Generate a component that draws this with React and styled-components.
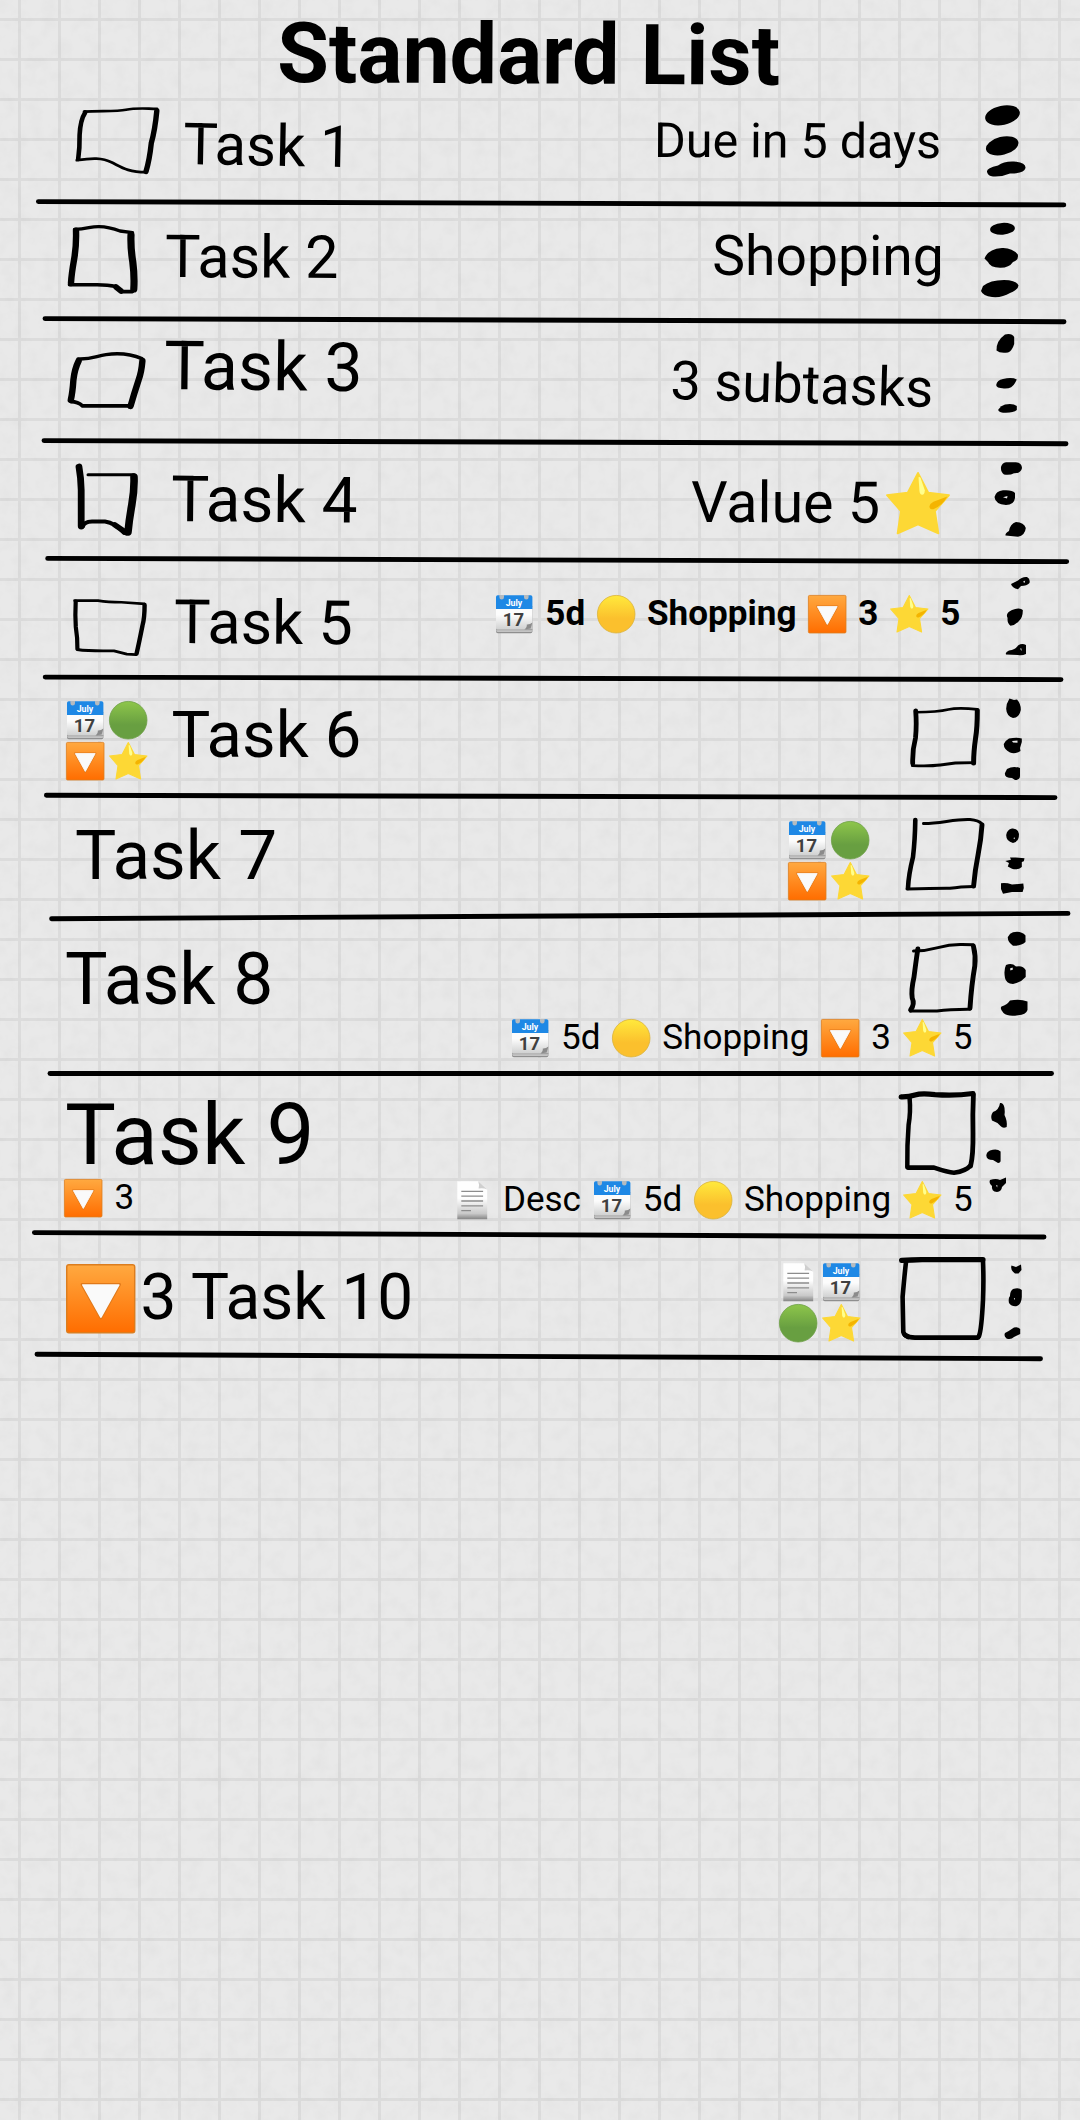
import React, { useId } from "react";
import styled, { createGlobalStyle } from "styled-components";

const GlobalStyle = createGlobalStyle`
  html, body { margin: 0; padding: 0; background: #e9e9e9; }
`;

const Page = styled.main`
  position: relative;
  width: 1080px;
  height: 2120px;
  overflow: hidden;
  color: #000;
  font-family: Roboto, "Liberation Sans", sans-serif;
  background-color: #e9e9e9;
  background-image:
    repeating-linear-gradient(to right, transparent 0 18px, #dcdcdc 18px 21px, transparent 21px 40px),
    repeating-linear-gradient(to bottom, transparent 0 18px, #dcdcdc 18px 21px, transparent 21px 40px);
`;

const Grain = styled.svg`
  position: absolute;
  inset: 0;
  width: 1080px;
  height: 2120px;
  pointer-events: none;
`;

const Sheet = styled.div`
  position: relative;
  display: flex;
  flex-direction: column;
`;

const Header = styled.header`
  box-sizing: border-box;
  height: 95px;
  padding: 12.3px 0 0 276.8px;
`;

const Title = styled.h1`
  margin: 0;
  font-size: 84.2px;
  font-weight: 700;
  line-height: 1;
  white-space: nowrap;
  transform: rotate(0.3deg);
  transform-origin: 0 84%;
`;

const Row = styled.section`
  box-sizing: border-box;
  display: flex;
  flex-direction: column;
  height: ${(p) => p.$height}px;
`;

const Line = styled.div`
  box-sizing: border-box;
  display: grid;
  grid-template-columns: ${(p) => p.$cols.map((c) => `${c}px`).join(" ")};
  align-items: start;
  flex: none;
  height: ${(p) => (p.$height ? `${p.$height}px` : "100%")};
  padding-left: ${(p) => p.$indent}px;
`;

const Text = styled.span`
  display: block;
  margin-top: ${(p) => p.$drop}px;
  font-size: ${(p) => p.$size}px;
  line-height: 1;
  white-space: nowrap;
  transform: rotate(${(p) => p.$tilt || 0}deg);
  transform-origin: 0 84%;
`;

const Strip = styled.div`
  display: flex;
  align-items: flex-start;
  gap: 9.1px;
  margin-top: ${(p) => p.$drop || 0}px;
  font-size: 35.1px;
  font-weight: ${(p) => (p.$bold ? 700 : 400)};
  line-height: 37.8px;
  white-space: nowrap;
`;

const IconGrid = styled.div`
  display: grid;
  grid-template-columns: ${(p) => p.$pitch || 43}px ${(p) => p.$pitch || 43}px;
  grid-auto-rows: 41px;
  margin-top: ${(p) => p.$drop}px;
`;

const IconCell = styled.span`
  display: flex;
  flex: none;
  justify-content: center;
  width: 43.6px;
`;

const IconSvg = styled.svg`
  display: block;
  flex: none;
  width: ${(p) => p.$size}px;
  height: ${(p) => p.$size}px;
  margin-top: ${(p) => p.$drop || 0}px;
  overflow: visible;
`;

const Ink = styled.svg`
  display: block;
  overflow: visible;
  fill: none;
  stroke: #000;
  stroke-linecap: round;
  stroke-linejoin: round;
`;

const Blots = styled(Ink)`
  fill: #000;
  stroke: none;
`;

const RuleSvg = styled(Ink)`
  flex: none;
  stroke-width: 4.9px;
`;

const CalendarText = styled.text`
  font-family: Roboto, "Liberation Sans", sans-serif;
  font-weight: 700;
  text-anchor: middle;
`;

function Calendar() {
  const id = useId();
  return (
    <>
      <defs>
        <linearGradient id={id} x1="0" y1="0" x2="0" y2="1">
          <stop offset="0.35" stopColor="#fcfcfc" />
          <stop offset="1" stopColor="#cfd0d0" />
        </linearGradient>
      </defs>
      <rect x="1" y="10" width="36.4" height="28.3" rx="1.8" fill="#8f8f8f" />
      <rect x="1.2" y="10" width="36" height="26.9" rx="1.5" fill="#c4c4c4" />
      <rect x="1" y="34.2" width="36.4" height="1" fill="#979797" />
      <path d="M1 12H37.4V28L30 34.6H2.6Q1 34.6 1 33Z" fill={`url(#${id})`} />
      <path d="M37.4 27.6Q35 29.8 31.8 29.6Q32.2 32.6 29.3 34.6L35.6 33.4Z" fill="#8b8b8b" />
      <path d="M1 14V2Q1 .3 2.7 .3H35.7Q37.4 .3 37.4 2V14Z" fill="#1e88e5" />
      <path d="M4.4 0H9V2.2A2.3 2.4 0 0 1 4.4 2.2ZM29 0H33.6V2.2A2.3 2.4 0 0 1 29 2.2Z" fill="#b5bbc0" />
      <CalendarText x="19" y="10.6" fontSize="8.8" fill="#fff">July</CalendarText>
      <CalendarText x="18.4" y="31" fontSize="18.5" fill="#404040">17</CalendarText>
    </>
  );
}

function Circle({ from, to, edge }) {
  const id = useId();
  return (
    <>
      <defs>
        <linearGradient id={id} x1="0" y1="0" x2="0" y2="1">
          <stop offset="0.05" stopColor={from} />
          <stop offset="0.62" stopColor={to} />
        </linearGradient>
      </defs>
      <circle cx="19.2" cy="19.2" r="18.8" fill={`url(#${id})`} stroke={edge} strokeWidth="0.8" />
    </>
  );
}

function Down() {
  const id = useId();
  return (
    <>
      <defs>
        <linearGradient id={id} x1="0" y1="0" x2="0" y2="1">
          <stop offset="0" stopColor="#ffa940" />
          <stop offset="1" stopColor="#ff6d00" />
        </linearGradient>
      </defs>
      <rect x="0.4" y="0.4" width="37.6" height="37.6" rx="1.2" fill={`url(#${id})`} stroke="#dc7d1e" strokeWidth="0.8" />
      <path d="M8.9 11.3H29.6L19.3 29.8Z" fill="#fafafa" stroke="#e0791a" strokeWidth="1.6" strokeLinejoin="round" />
      <path d="M9.3 11.6H29.2L19.3 29.4Z" fill="#fafafa" stroke="#fafafa" strokeWidth="0.9" strokeLinejoin="round" />
    </>
  );
}

function Star() {
  return (
    <>
      <path
        d="M19.3 .5L25.5 12.5L38 14L29.5 23.6L31.6 37L19.3 31.6L7 37L9 23.6L.6 14L13.1 12.5Z"
        fill="#fdd835" stroke="#fdd835" strokeWidth="1.1" strokeLinejoin="round"
      />
      <path d="M19.6 3.2Q20.4 2.6 20.9 3.8L23.4 11Q23.4 13.6 21.8 13.7Q20.4 13.6 20.2 11.6Z" fill="#ffff8d" />
      <path d="M37 14.8Q34 20.4 28.6 22.4Q26.2 23 26.2 20.7Q26.4 19.2 28.6 18Z" fill="#f4b400" />
    </>
  );
}

function Doc() {
  const id = useId();
  return (
    <>
      <defs>
        <linearGradient id={id} x1="0" y1="0" x2="0" y2="1">
          <stop offset="0.45" stopColor="#fefefe" />
          <stop offset="0.85" stopColor="#c9c9c9" />
          <stop offset="1" stopColor="#858585" />
        </linearGradient>
      </defs>
      <path d="M4.3 .2H25.2L34.2 8.4V38.2H4.3Z" fill={`url(#${id})`} />
      <path d="M25.2 .2Q26.8 4 25.6 7.6Q30 6.6 34.2 8.4Z" fill="#cfcfcf" />
      <path d="M8.3 10.3H30.1M8.3 15.2H30.1M8.3 20H30.1M8.3 24.8H30.1M8.3 29.7H18" stroke="#8c8c8c" strokeWidth="1.3" />
    </>
  );
}

const glyphs = {
  calendar: <Calendar />,
  yellow: <Circle from="#ffe63b" to="#fbc02d" edge="#dbb33a" />,
  green: <Circle from="#8bc34a" to="#689f41" edge="#6f9f48" />,
  down: <Down />,
  star: <Star />,
  doc: <Doc />,
};

function Icon({ name, size = 38.6, drop }) {
  return (
    <IconSvg viewBox="0 0 38.6 38.6" $size={size} $drop={drop} aria-hidden="true">
      {glyphs[name]}
    </IconSvg>
  );
}

function Tag({ icon }) {
  return <IconCell><Icon name={icon} /></IconCell>;
}

function Tags({ icons, drop, pitch }) {
  return (
    <IconGrid $drop={drop} $pitch={pitch}>
      {icons.map((name) => <Tag key={name} icon={name} />)}
    </IconGrid>
  );
}

// Each stroke is [path, pen width]; the view box starts at the row's top edge.
function Box({ x, y, strokes }) {
  return (
    <Ink width="90" height="100" viewBox={`${x} ${y} 90 100`} role="img" aria-label="Checkbox">
      {strokes.map(([d, w], i) => <path key={i} d={d} strokeWidth={w} />)}
    </Ink>
  );
}

function Dots({ y, children }) {
  return (
    <Blots width="60" height="100" viewBox={`980 ${y} 60 100`} role="img" aria-label="More">
      {children}
    </Blots>
  );
}

function Blob({ x, y, rx, ry, turn = 0 }) {
  return <ellipse cx={x} cy={y} rx={rx} ry={ry} transform={`rotate(${turn} ${x} ${y})`} />;
}

function Rule({ y, from, to }) {
  return (
    <RuleSvg width="1080" height="16" viewBox={`0 ${y} 1080 16`} aria-hidden="true">
      <path d={`M${from[0] + 2} ${from[1]}L${to[0] - 2} ${to[1]}`} />
    </RuleSvg>
  );
}

export default function App() {
  return (
    <Page>
      <GlobalStyle />
      <Grain aria-hidden="true">
        <filter id="paper" x="0" y="0" width="100%" height="100%">
          <feTurbulence type="fractalNoise" baseFrequency="0.07 0.07" numOctaves="3" seed="4" />
          <feColorMatrix values="0 0 0 0 0  0 0 0 0 0  0 0 0 0 0  0.04 0 0 0 -0.016" />
        </filter>
        <rect width="1080" height="2120" filter="url(#paper)" />
      </Grain>
      <Sheet>
        <Header><Title>Standard List</Title></Header>

        <Row $height={100}>
          <Line $indent={70} $cols={[113, 471.2, 325.8, 60]}>
            <Box x={70} y={95} strokes={[
              ["M85.2 112.5Q80.3 120 79.6 135Q79.8 148 78.2 159", 4.6],
              ["M84 111.7C100 110.6 116 112 126 109.8S144 108.6 157 108.8", 2.7],
              ["M156.8 111Q155 130 151.3 143Q149.5 160 146 171.5", 5.4],
              ["M76.8 160.2C92 158 102 157.5 112 162.5S128 172 146 172.2", 2.8],
            ]} />
            <Text $size={57.9} $drop={21.1} $tilt={1.1}>Task 1</Text>
            <Text $size={48.4} $drop={22} $tilt={0.2}>Due in 5 days</Text>
            <Dots y={95}>
              <Blob x={1002.5} y={115.3} rx={17.6} ry={9.6} turn={-12} />
              <Blob x={1002.2} y={145.8} rx={16.6} ry={9} turn={-14} />
              <path d="M987 172Q986 168 998 165.5Q1004 161 1014 161.5Q1026 162 1025.5 168Q1024 173.5 1010 173.5Q1002 177 993 176.5Q988 176 987 172Z" />
            </Dots>
          </Line>
        </Row>
        <Rule y={195} from={[36.4, 201.6]} to={[1065.8, 204.9]} />

        <Row $height={101}>
          <Line $indent={66} $cols={[98.5, 547.8, 267.7, 60]}>
            <Box x={66} y={211} strokes={[
              ["M76 230.6Q76.5 246 74 260T71 283", 6.4],
              ["M74.5 229.4C88 229 90 226.4 99 226.6S112 228 120 231T132.5 232.6", 3.4],
              ["M131 235Q130.5 248 132.8 262Q134.6 276 133.8 289", 7.2],
              ["M69.5 284.8H97Q108 285 116 286.6L121.5 291.6H132.5", 3.6],
              ["M116 287L121 291", 5.6],
            ]} />
            <Text $size={59.4} $drop={17.3} $tilt={0.35}>Task 2</Text>
            <Text $size={55.2} $drop={17.7}>Shopping</Text>
            <Dots y={211}>
              <Blob x={1002.5} y={228.8} rx={12.4} ry={5.9} turn={-4} />
              <path d="M984.5 258.5Q988 249 1002 248Q1012 247.5 1017.8 254.5Q1019 260 1013 262Q1009 268 1000 267.8Q990 267.5 988 262Z" />
              <path d="M983 286Q990 280 1004 280Q1016 280 1018.5 285.5Q1018 290 1010 293Q1002 298 992 297Q983 296 981 291Z" />
            </Dots>
          </Line>
        </Row>
        <Rule y={312} from={[43, 318.6]} to={[1066, 321.7]} />

        <Row $height={106}>
          <Line $indent={66} $cols={[98.2, 505.4, 310.4, 60]}>
            <Box x={66} y={328} strokes={[
              ["M78.6 361Q74.6 369 73.4 380Q72.5 393 70.8 400", 6.4],
              ["M78 359C92 359.6 96 356 106 354.6S130 353.6 142 358.6", 3.4],
              ["M142.4 361Q141.5 372 138.6 380Q134 394 130.6 406", 6.4],
              ["M71 401.6Q78 401.6 82.5 405.8H131", 3.8],
            ]} />
            <Text $size={68} $drop={3.9} $tilt={0.6}>Task 3</Text>
            <Text $size={54.2} $drop={25.7} $tilt={1.75}>3 subtasks</Text>
            <Dots y={328}>
              <path d="M1005 334.5Q1012 333 1014.2 337V344Q1012 351 1008 352.5Q1000 353.8 996.5 350.5Q996 341 1005 334.5Z" />
              <path d="M1003 379Q1012 377 1016.8 379.5L1015 383Q1012 389 1004 388.5Q996 388 996.2 385Q997 380 1003 379Z" />
              <path d="M1005 404.5Q1013 403 1016.8 406V410Q1013 413.3 1003 412.7Q998 412 998.3 409.5Q1001 405.5 1005 404.5Z" />
            </Dots>
          </Line>
        </Row>
        <Rule y={434} from={[42, 440.6]} to={[1068, 443.7]} />

        <Row $height={102}>
          <Line $indent={70} $cols={[101.2, 520.1, 194.7, 94, 60]}>
            <Box x={70} y={450} strokes={[
              ["M79 467Q81 478 81.2 490V526", 6.8],
              ["M88 474.7H134", 3],
              ["M134 477Q134.5 490 131.8 505T128 532", 7.6],
              ["M83 526.4Q84 522 92 521.6H105Q115 523 124 533", 4],
              ["M115 525L126 532.5", 5.6],
            ]} />
            <Text $size={63.9} $drop={17.9} $tilt={0.5}>Task 4</Text>
            <Text $size={57.4} $drop={24.4} $tilt={0.2}>Value 5</Text>
            <Icon name="star" size={64} drop={22} />
            <Dots y={450}>
              <path d="M1006 462.3H1016Q1021.8 463 1022 468Q1021 473.5 1014 473.2Q1010 475.5 1004 474.5Q1000.5 472 1001 467Q1002 463 1006 462.3Z" />
              <path fillRule="evenodd" d="M1003 490.3Q1012 489.5 1015 493V498Q1014 505 1006 505Q995 504 994.5 497Q996 491 1003 490.3ZM1003 497.3L1007.5 496L1007 498.6Z" />
              <path d="M1016 522Q1024 522.5 1025.8 528Q1025 535.5 1018 536.7L1005.5 535.5Q1005 533 1009 531Q1010 524 1016 522Z" />
            </Dots>
          </Line>
        </Row>
        <Rule y={552} from={[45.7, 558.4]} to={[1068.7, 561.6]} />

        <Row $height={102}>
          <Line $indent={70} $cols={[104.4, 318.2, 487.4, 60]}>
            <Box x={70} y={568} strokes={[
              ["M75.7 601.5Q75 615 75.8 627Q77.6 638 77.4 648.6", 4.2],
              ["M74.5 600.6L98 600.6Q108 602.2 121.4 602.3L144.5 603.9", 2.6],
              ["M144.6 605Q144.6 618 142.5 625.5Q139 643 136.6 653.5", 4.4],
              ["M77 649.5Q90 651.4 114 650.8L126.8 654.2L136 654.6", 2.8],
            ]} />
            <Text $size={61.2} $drop={23.9} $tilt={0.4}>Task 5</Text>
            <Strip $bold $drop={27.4}>
              <Tag icon="calendar" /><span>5d</span>
              <Tag icon="yellow" /><span>Shopping</span>
              <Tag icon="down" /><span>3</span>
              <Tag icon="star" /><span>5</span>
            </Strip>
            <Dots y={568}>
              <path fillRule="evenodd" d="M1011 584L1018 580.5Q1022 576.5 1027 577Q1030.5 579 1029.5 583Q1027 586 1021 586L1018 589.3Q1012 588 1011 584ZM1023 581.8L1025.2 580.4L1024.5 583Z" />
              <path d="M1012 610Q1020 607 1022.8 610Q1023 617 1019 621Q1015 625.5 1010.5 625.7Q1007 623 1007.6 618Q1005 613 1012 610Z" />
              <path fillRule="evenodd" d="M1018 645.5Q1022 643 1026 645V654Q1022 656 1018 655L1006 654.6Q1005 652 1009 650.5Q1015 650 1018 645.5ZM1020 648.5L1021.5 648.5V651Z" />
            </Dots>
          </Line>
        </Row>
        <Rule y={670} from={[43.2, 677.1]} to={[1063, 679.6]} />

        <Row $height={102}>
          <Line $indent={63.7} $cols={[107.7, 733.3, 75.3, 60]}>
            <Tags drop={15.2} pitch={43.3} icons={["calendar", "green", "down", "star"]} />
            <Text $size={65.1} $drop={16.8}>Task 6</Text>
            <Box x={904.7} y={686} strokes={[
              ["M915.4 711Q916.5 725 915.2 738Q912 750 912.4 763.5", 4.8],
              ["M915 712.2C928 712.2 940 711.6 948 709.6S964 708 977 709.4", 2.6],
              ["M977 710.5Q977 728 975.3 738Q973.3 752 973.3 763", 5],
              ["M912 765.6Q930 766.3 940 765T955 763L974 762.6", 2.8],
            ]} />
            <Dots y={686}>
              <path d="M1009.5 698.5L1014 700L1017 699.5Q1021 704 1020.8 710Q1019 718 1013 718Q1006.5 716 1006.2 709Q1006 704 1009.5 698.5Z" />
              <path fillRule="evenodd" d="M1009 738.5Q1017 737 1021.8 738.5V742L1020 748L1020.5 751Q1015 754.5 1010 752.5Q1003.5 749 1003.8 744Q1006 740 1009 738.5ZM1012 741L1017.5 740.5V742.8L1013 742.5Z" />
              <path d="M1007 769Q1013 765.5 1020 768V776Q1020 780 1015 780L1012 778Q1004 778 1005 773Z" />
            </Dots>
          </Line>
        </Row>
        <Rule y={788} from={[44.4, 795.2]} to={[1057, 797.6]} />

        <Row $height={104}>
          <Line $indent={74.9} $cols={[710.8, 114.3, 80, 60]}>
            <Text $size={69.3} $drop={16.9}>Task 7</Text>
            <Tags drop={17.2} icons={["calendar", "green", "down", "star"]} />
            <Box x={900} y={804} strokes={[
              ["M915.3 820Q915 840 913 857Q908.5 875 908 888", 4.6],
              ["M923.5 823.6C940 823.8 955 818.8 970 819.6Q979 820.4 981.8 824", 3],
              ["M982 825Q981 840 978.2 854Q975 870 973.6 886", 4.9],
              ["M907 889Q935 888.2 950 888.3Q960 886.6 974 886.4", 3],
            ]} />
            <Dots y={804}>
              <path fillRule="evenodd" d="M1012 828.5Q1018 828 1019 834Q1019 842 1013 843Q1006 841.5 1006.2 835Q1007 829.5 1012 828.5ZM1013.3 838L1015 837.5L1014.5 839.2Z" />
              <path d="M1005.3 861L1011 859.7L1010 857.5L1016 857.5L1024.5 858.2L1023.8 861.2L1021.8 862V867Q1018 870.5 1012 868.8L1007.8 866.5L1009 863Z" />
              <path d="M1001 883.3Q1006 882.5 1012 884.5L1023.3 883.5L1023.8 888L1022.6 892H1012L1003 893.7L1001 889Z" />
            </Dots>
          </Line>
        </Row>
        <Rule y={908} from={[49.6, 918.7]} to={[1070, 913.4]} />

        <Row $height={142}>
          <Line $indent={65} $height={94.8} $cols={[840, 75, 60]}>
            <Text $size={71.4} $drop={20.2}>Task 8</Text>
            <Box x={905} y={924} strokes={[
              ["M917.8 949Q915.5 965 914 977Q911 990 912.2 998Q915 1004 910.6 1010", 4.9],
              ["M913.5 951Q926 951 938 947.6T962 944.5L973 944.7", 3],
              ["M973.4 946Q976 956 974.8 966Q971.5 985 970 1008", 4.9],
              ["M910.5 1011H937Q950 1009.2 970 1009.3", 3],
            ]} />
            <Dots y={924}>
              <path d="M1013 932.3Q1021 930.5 1025.5 935.5V942Q1021 946 1013 945.7Q1007.5 942 1007.8 937Q1010 933 1013 932.3Z" />
              <path fillRule="evenodd" d="M1006 965Q1012 962.5 1016 966.5Q1023 965 1025.7 970V977Q1021 982.5 1013 984Q1006 983.5 1005 978Q1003.5 970 1006 965ZM1010 968.5L1012.5 967.5L1013 969.5L1010.5 970.5Z" />
              <path d="M1010 1000.5Q1020 998.5 1027.5 1001.5V1010Q1026 1015 1018 1015.2Q1008 1017 1003.5 1013Q999.5 1009 1001.5 1006.5Q1007 1005 1010 1000.5Z" />
            </Dots>
          </Line>
          <Line $indent={508.3} $height={47} $cols={[480]}>
            <Strip>
              <Tag icon="calendar" /><span>5d</span>
              <Tag icon="yellow" /><span>Shopping</span>
              <Tag icon="down" /><span>3</span>
              <Tag icon="star" /><span>5</span>
            </Strip>
          </Line>
        </Row>
        <Rule y={1066} from={[48, 1073.5]} to={[1053.5, 1073.5]} />

        <Row $height={145}>
          <Line $indent={65} $height={97} $cols={[830, 85, 60]}>
            <Text $size={85.5} $drop={11.2}>Task 9</Text>
            <Box x={895} y={1082} strokes={[
              ["M909.6 1098Q910.8 1112 908.6 1125Q907 1145 907.3 1167", 4.5],
              ["M901.2 1096.8Q909 1097 915 1095T935 1094.6Q955 1096 973 1093.5", 5.2],
              ["M973.4 1095Q972.5 1115 973 1133Q973.3 1155 970.6 1166", 4.8],
              ["M907.8 1167.6H934Q948 1172.4 954 1172.7Q966 1171 970 1166", 4.6],
            ]} />
            <Dots y={1082}>
              <path d="M1000 1103Q1003.5 1102.5 1004.5 1108Q1005 1112 1004.5 1115Q1007.5 1121 1006.7 1127Q1003 1129 1000.5 1126Q997 1122 992 1120.5Q990 1116 993 1112Q999 1110 1000 1103Z" />
              <path d="M990 1150.5Q997 1148 1000.6 1151.5V1160Q1001 1162.5 998 1163L993 1160Q986.5 1160 986.3 1155.5Q986.5 1152 990 1150.5Z" />
              <path fillRule="evenodd" d="M990 1180Q996 1178 1000 1180L1006 1177.5V1183L1002 1187Q1001.5 1191.5 997 1192Q991 1191.5 992 1186Q988.5 1183 990 1180ZM996 1185.5L997.3 1185V1187.5Z" />
            </Dots>
          </Line>
          <Line $indent={61.8} $height={47} $cols={[388.4, 540]}>
            <Strip><Tag icon="down" /><span>3</span></Strip>
            <Strip $drop={2.2}>
              <Tag icon="doc" /><span>Desc</span>
              <Tag icon="calendar" /><span>5d</span>
              <Tag icon="yellow" /><span>Shopping</span>
              <Tag icon="star" /><span>5</span>
            </Strip>
          </Line>
        </Row>
        <Rule y={1227} from={[32.4, 1232.6]} to={[1046, 1237]} />

        <Row $height={105}>
          <Line $indent={65.8} $cols={[74.6, 636, 118.6, 85, 60]}>
            <Icon name="down" size={69.8} drop={20.8} />
            <Text $size={63.9} $drop={22.7}>3 Task 10</Text>
            <Tags drop={20.3} pitch={43.5} icons={["doc", "calendar", "green", "star"]} />
            <Box x={895} y={1243} strokes={[
              ["M906 1262Q904.5 1275 902.6 1297Q903 1315 903.3 1332Q904 1335 908 1337", 4.6],
              ["M901.6 1260.3Q912 1260 922 1259.6H983", 5.2],
              ["M983 1261Q983.8 1280 983 1300Q981.5 1330 979 1336", 4.6],
              ["M905 1335Q909 1337.6 915 1337.6H978", 4.8],
            ]} />
            <Dots y={1243}>
              <path d="M1011.5 1265.5L1016 1267L1021 1264.5L1021.5 1270L1018.5 1273.5H1015Q1010 1270 1011.5 1265.5Z" />
              <path fillRule="evenodd" d="M1013 1289Q1019 1287 1021.8 1290V1297Q1021.5 1304 1017 1306Q1012 1307 1009 1303Q1008 1298 1010 1296Q1010 1291 1013 1289ZM1013.8 1298.5L1015 1298V1300Z" />
              <path d="M1014 1327.5Q1018 1326.5 1020.2 1329V1334L1014 1337Q1011 1340 1006.5 1338.5Q1003.5 1336 1005 1333Q1009 1331 1014 1327.5Z" />
            </Dots>
          </Line>
        </Row>
        <Rule y={1348} from={[35, 1354.3]} to={[1042.5, 1358.7]} />
      </Sheet>
    </Page>
  );
}
